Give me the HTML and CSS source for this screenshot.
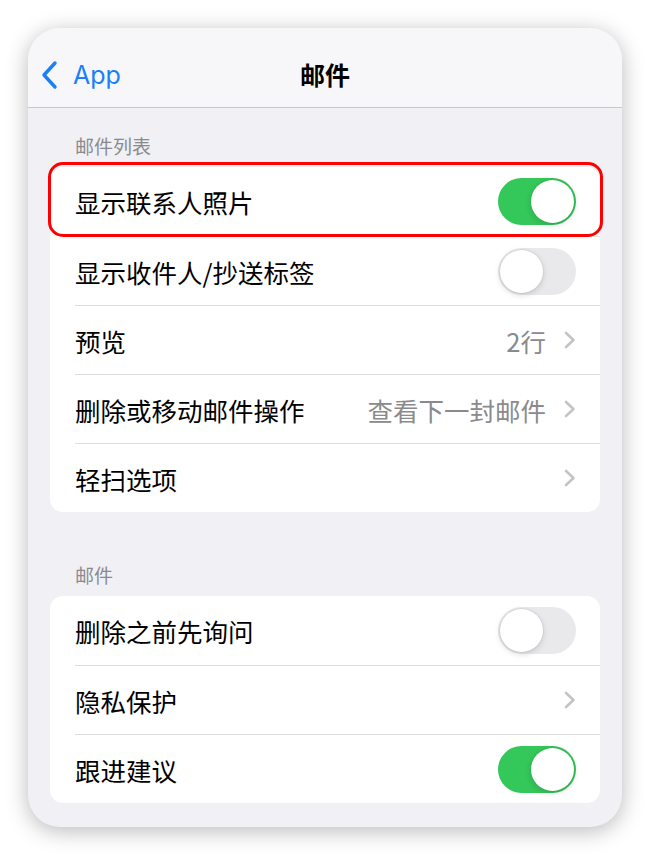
FILE: index.html
```html
<!DOCTYPE html>
<html lang="zh-CN">

<head>
    <meta charset="UTF-8">
    <meta name="viewport" content="width=device-width, initial-scale=1.0">
    <title>邮件</title>
    <link rel="stylesheet" href="styles.css">
</head>

<body>
    <div class="device">
        <header class="navbar">
            <a class="back" href="#">
                <svg class="back-icon" width="20" height="30" viewBox="0 0 20 30">
                    <path d="M15 3 L4 15 L15 27" fill="none" stroke="currentColor" stroke-width="3.4" stroke-linecap="round" stroke-linejoin="round" />
                </svg>
                <span>App</span>
            </a>
            <h1 class="title">邮件</h1>
            <span></span>
        </header>

        <main class="content">
            <section class="group">
                <h2 class="group-title">邮件列表</h2>
                <ul class="card">
                    <li class="row highlighted">
                        <div class="row-body">
                            <span class="label">显示联系人照片</span>
                            <span class="switch on"><i></i></span>
                        </div>
                    </li>
                    <li class="row">
                        <div class="row-body">
                            <span class="label">显示收件人/抄送标签</span>
                            <span class="switch"><i></i></span>
                        </div>
                    </li>
                    <li class="row">
                        <div class="row-body">
                            <span class="label">预览</span>
                            <span class="detail">2行</span>
                            <svg class="chevron" width="12" height="18" viewBox="0 0 12 18"><path d="M2 2 L9.5 9 L2 16" /></svg>
                        </div>
                    </li>
                    <li class="row">
                        <div class="row-body">
                            <span class="label">删除或移动邮件操作</span>
                            <span class="detail">查看下一封邮件</span>
                            <svg class="chevron" width="12" height="18" viewBox="0 0 12 18"><path d="M2 2 L9.5 9 L2 16" /></svg>
                        </div>
                    </li>
                    <li class="row">
                        <div class="row-body">
                            <span class="label">轻扫选项</span>
                            <svg class="chevron" width="12" height="18" viewBox="0 0 12 18"><path d="M2 2 L9.5 9 L2 16" /></svg>
                        </div>
                    </li>
                </ul>
            </section>

            <section class="group">
                <h2 class="group-title">邮件</h2>
                <ul class="card">
                    <li class="row">
                        <div class="row-body">
                            <span class="label">删除之前先询问</span>
                            <span class="switch"><i></i></span>
                        </div>
                    </li>
                    <li class="row">
                        <div class="row-body">
                            <span class="label">隐私保护</span>
                            <svg class="chevron" width="12" height="18" viewBox="0 0 12 18"><path d="M2 2 L9.5 9 L2 16" /></svg>
                        </div>
                    </li>
                    <li class="row">
                        <div class="row-body">
                            <span class="label">跟进建议</span>
                            <span class="switch on"><i></i></span>
                        </div>
                    </li>
                </ul>
            </section>
        </main>
    </div>
</body>

</html>
```

FILE: styles.css
```css
* {
    margin: 0;
    padding: 0;
    box-sizing: border-box;
}

body {
    background: #fff;
    font-family: "Noto Sans CJK SC", "Noto Sans", sans-serif;
    color: #000;
}

.device {
    width: 594px;
    height: 799px;
    margin: 28px;
    border-radius: 32px;
    overflow: hidden;
    background: #f0f0f5;
    box-shadow: 0 4px 22px rgba(0, 0, 0, .28);
}

/* 상단 내비게이션 */
.navbar {
    height: 80px;
    display: grid;
    grid-template-columns: 1fr auto 1fr;
    align-items: center;
    background: #f7f7f9;
    border-bottom: 1px solid #c8c8cc;
    padding: 14px 12px 0;
}

.back {
    display: flex;
    align-items: center;
    gap: 13px;
    color: #1a7ff8;
    text-decoration: none;
    font-family: Inter, "Noto Sans", sans-serif;
    font-size: 25px;
}

.back-icon {
    display: block;
}

.title {
    font-size: 25px;
    font-weight: 700;
    line-height: 1;
}

.content {
    padding: 0 22px;
}

.group-title {
    padding: 25px 25px 8px;
    font-size: 19px;
    font-weight: 400;
    line-height: 26px;
    color: #8a8a8e;
}

.group + .group .group-title {
    padding-top: 50px;
}

.card {
    list-style: none;
    background: #fff;
    border-radius: 13px;
}

.row {
    padding-left: 25px;
    position: relative;
}

.row + .row .row-body {
    border-top: 1px solid #dedee1;
}

.row-body {
    height: 69px;
    display: flex;
    align-items: center;
    padding-right: 24px;
    font-size: 25.5px;
}

.label {
    flex: 1;
}

.detail {
    color: #8a8a8e;
    margin-right: 18px;
}

.chevron path {
    fill: none;
    stroke: #c4c4c7;
    stroke-width: 2.6;
    stroke-linecap: round;
    stroke-linejoin: round;
}

/* 빨간 강조 테두리 */
.highlighted::after {
    content: "";
    position: absolute;
    top: -5px;
    left: -2px;
    right: -3px;
    bottom: -1px;
    border: 3px solid #ff0000;
    border-radius: 15px;
    pointer-events: none;
    z-index: 1;
}

.switch {
    width: 78px;
    height: 47px;
    border-radius: 24px;
    background: #e9e9eb;
    padding: 2px;
    display: flex;
}

.switch i {
    width: 43px;
    height: 43px;
    border-radius: 50%;
    background: #fff;
    box-shadow: 0 2px 6px rgba(0, 0, 0, .15), 0 0 0 1px rgba(0, 0, 0, .04);
}

.switch.on {
    background: #34c759;
    justify-content: flex-end;
}
```
